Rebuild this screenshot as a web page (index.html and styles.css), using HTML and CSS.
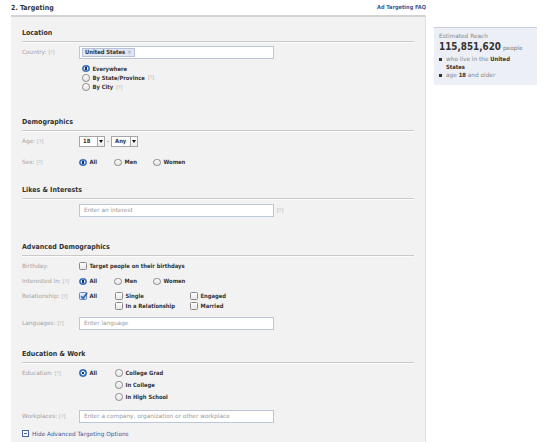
FILE: index.html
```html
<!DOCTYPE html>
<html>
<head>
<meta charset="utf-8">
<link rel="stylesheet" href="styles.css">
</head>
<body>
<div class="page">
  <div class="main">
    <div class="main-head">
      <h2 class="title">2. Targeting</h2>
      <a class="faq">Ad Targeting FAQ</a>
    </div>
    <div class="panel">
      <h3 class="sec sec-first">Location</h3>
      <div class="field f-country">
        <div class="lbl">Country: <span class="q">[?]</span></div>
        <div class="input token-input"><span class="token">United States <span class="x">×</span></span></div>
      </div>
      <div class="loc-opts">
        <div class="opt"><span class="radio on"></span>Everywhere</div>
        <div class="opt"><span class="radio"></span>By State/Province <span class="q">[?]</span></div>
        <div class="opt"><span class="radio"></span>By City <span class="q">[?]</span></div>
      </div>

      <h3 class="sec sec-demo">Demographics</h3>
      <div class="field f-age">
        <div class="lbl">Age: <span class="q">[?]</span></div>
        <div class="ages">
          <span class="sel sel-18"><span class="sv">18</span><span class="arr"></span></span>
          <span class="dash">-</span>
          <span class="sel sel-any"><span class="sv">Any</span><span class="arr"></span></span>
        </div>
      </div>
      <div class="field f-sex">
        <div class="lbl">Sex: <span class="q">[?]</span></div>
        <div class="opts cols-sex">
          <div class="opt"><span class="radio on"></span>All</div>
          <div class="opt"><span class="radio"></span>Men</div>
          <div class="opt"><span class="radio"></span>Women</div>
        </div>
      </div>

      <h3 class="sec sec-likes">Likes &amp; Interests</h3>
      <div class="field f-likes">
        <div class="lbl"></div>
        <div class="with-q"><div class="input"><span class="ph">Enter an interest</span></div><span class="q q-after">[?]</span></div>
      </div>

      <h3 class="sec sec-adv">Advanced Demographics</h3>
      <div class="field f-bday">
        <div class="lbl">Birthday:</div>
        <div class="opt"><span class="check"></span>Target people on their birthdays</div>
      </div>
      <div class="field f-int">
        <div class="lbl">Interested In: <span class="q">[?]</span></div>
        <div class="opts cols-sex">
          <div class="opt"><span class="radio on"></span>All</div>
          <div class="opt"><span class="radio"></span>Men</div>
          <div class="opt"><span class="radio"></span>Women</div>
        </div>
      </div>
      <div class="field f-rel">
        <div class="lbl">Relationship: <span class="q">[?]</span></div>
        <div class="opts cols-rel">
          <div class="opt"><span class="check on"><svg viewBox="0 0 8 8" width="8" height="8"><path d="M1.3 4.2 L3.2 6.3 L7.2 0.8" fill="none" stroke="#2a5db0" stroke-width="1.5"/></svg></span>All</div>
          <div class="opt"><span class="check"></span>Single</div>
          <div class="opt"><span class="check"></span>Engaged</div>
          <div class="opt"></div>
          <div class="opt"><span class="check"></span>In a Relationship</div>
          <div class="opt"><span class="check"></span>Married</div>
        </div>
      </div>
      <div class="field f-lang">
        <div class="lbl">Languages: <span class="q">[?]</span></div>
        <div class="input"><span class="ph">Enter language</span></div>
      </div>

      <h3 class="sec sec-edu">Education &amp; Work</h3>
      <div class="field f-edu">
        <div class="lbl">Education: <span class="q">[?]</span></div>
        <div class="opts cols-edu">
          <div class="opt"><span class="radio on"></span>All</div>
          <div class="opt"><span class="radio"></span>College Grad</div>
          <div class="opt"></div>
          <div class="opt"><span class="radio"></span>In College</div>
          <div class="opt"></div>
          <div class="opt"><span class="radio"></span>In High School</div>
        </div>
      </div>
      <div class="field f-work">
        <div class="lbl">Workplaces: <span class="q">[?]</span></div>
        <div class="input"><span class="ph">Enter a company, organization or other workplace</span></div>
      </div>
      <a class="hide"><span class="minus"></span>Hide Advanced Targeting Options</a>
    </div>
  </div>
  <aside class="reach">
    <div class="reach-title">Estimated Reach</div>
    <div class="reach-num"><b>115,851,620</b> <span>people</span></div>
    <ul class="reach-list">
      <li>who live in the <b>United</b> <b>States</b></li>
      <li>age <b>18</b> and older</li>
    </ul>
  </aside>
</div>
</body>
</html>
```

FILE: styles.css
```css
* { box-sizing: border-box; }
html, body { margin: 0; padding: 0; background: #fff; }
body {
  font-family: "DejaVu Sans", "Liberation Sans", sans-serif;
  font-size: 5.8px;
  color: #333;
  width: 550px;
  height: 442px;
  overflow: hidden;
}
.page { display: flex; align-items: flex-start; padding-left: 11px; }
.main { width: 415px; }
.main-head {
  height: 17px;
  border-bottom: 2px solid #d3d3d3;
  display: flex;
  justify-content: space-between;
  align-items: flex-start;
  padding-top: 3px;
}
.title {
  margin: 0;
  font-family: "DejaVu Sans Condensed", "DejaVu Sans", sans-serif;
  font-weight: bold;
  font-size: 7px;
  line-height: 10px;
  color: #333;
}
.faq {
  font-family: "DejaVu Sans Condensed", "DejaVu Sans", sans-serif;
  font-weight: bold;
  font-size: 5.6px;
  line-height: 8px;
  color: #3b5998;
}
.panel {
  background: #f2f2f2;
  border-right: 1px solid #e2e2e2;
  padding: 10px 11px 20px 11px;
  height: 440px;
}
.sec {
  margin: 0;
  font-family: "DejaVu Sans Condensed", "DejaVu Sans", sans-serif;
  font-weight: bold;
  font-size: 7px;
  line-height: 10px;
  padding-bottom: 3px;
  border-bottom: 1px solid #c9c9c9;
  box-shadow: 0 1px 0 #fbfbfb;
  color: #333;
}
.sec-first { margin-top: 1px; }
.sec-demo { margin-top: 25px; }
.sec-likes { margin-top: 17px; }
.sec-adv { margin-top: 25px; }
.sec-edu { margin-top: 19px; }

.field { display: grid; grid-template-columns: 57px 1fr; align-items: center; }
.lbl { color: #a3a3a3; line-height: 10px; white-space: nowrap; }
.q { color: #b0b0b0; font-size: 4.8px; }
.q-after { margin-left: 3px; }

.input {
  width: 195px;
  height: 13px;
  background: #fff;
  border: 1px solid #bdc7d8;
  display: flex;
  align-items: center;
  padding-left: 4px;
}
.ph { color: #999; }
.with-q { display: flex; align-items: center; }

.f-country { margin-top: 4px; }
.token-input { padding-left: 2px; }
.token {
  background: #e2e6f0;
  border: 1px solid #b5c0d9;
  height: 9px;
  line-height: 7px;
  padding: 0 2px;
  font-family: "DejaVu Sans Condensed", "DejaVu Sans", sans-serif;
  font-weight: bold;
  color: #333;
  display: inline-flex;
  align-items: center;
}
.token .x { color: #8a9bc0; font-weight: normal; margin-left: 2px; }

.loc-opts { margin: 5px 0 0 60px; }
.loc-opts .opt { height: 9.3px; }

.opt {
  display: flex;
  align-items: center;
  font-family: "DejaVu Sans Condensed", "DejaVu Sans", sans-serif;
  font-weight: bold;
  color: #333;
  white-space: nowrap;
}
.opt .q { font-family: "DejaVu Sans", sans-serif; font-weight: normal; margin-left: 3px; }

.radio {
  width: 7.5px; height: 7.5px;
  border-radius: 50%;
  border: 1px solid #8a8a8a;
  background: linear-gradient(#fdfdfd, #e3e3e3);
  margin-right: 3px;
  flex: none;
}
.radio.on {
  border-color: #27579f;
  background: radial-gradient(circle, #17305a 0 1.2px, #fff 1.4px 1.7px, #4b8be0 2px);
}
.check {
  width: 7.5px; height: 7.5px;
  border-radius: 1.5px;
  border: 1px solid #8a8a8a;
  background: linear-gradient(#fdfdfd, #e8e8e8);
  margin-right: 3px;
  flex: none;
  position: relative;
}
.check.on { border-color: #6c8ac0; background: linear-gradient(#e6eefb, #b9cdee); }
.check svg { position: absolute; left: -0.5px; top: -1.5px; }

.f-age { margin-top: 5px; }
.ages { display: flex; align-items: center; }
.sel {
  height: 11px;
  background: #fff;
  border: 1px solid #a6a6a6;
  display: flex;
  align-items: center;
  font-family: "DejaVu Sans Condensed", "DejaVu Sans", sans-serif;
  font-weight: bold;
}
.sel-18 { width: 26px; }
.sel-any { width: 27px; }
.sv { flex: 1; padding-left: 3px; }
.arr {
  width: 7px; height: 9px;
  border-left: 1px solid #a6a6a6;
  position: relative;
  background: linear-gradient(#fff, #ececec);
}
.arr::after {
  content: "";
  position: absolute;
  left: 1.2px; top: 3px;
  border-left: 2px solid transparent;
  border-right: 2px solid transparent;
  border-top: 3px solid #111;
}
.dash { color: #666; margin: 0 2px; }

.opts { display: grid; }
.opts .opt { height: 10px; }
.cols-sex { grid-template-columns: 35px 39px auto; }
.f-sex { margin-top: 10px; }

.f-likes { margin-top: 5px; }

.f-bday { margin-top: 5px; }
.f-bday .opt { height: 10px; }
.f-int { margin-top: 5px; }
.f-rel { margin-top: 4px; align-items: start; }
.cols-rel { grid-template-columns: 36px 75px auto; }
.f-lang { margin-top: 6px; }

.f-edu { margin-top: 4px; align-items: start; }
.f-edu .lbl { line-height: 12px; }
.cols-edu { grid-template-columns: 36px auto; }
.cols-edu .opt { height: 12px; }
.f-work { margin-top: 7px; }

.hide {
  display: flex;
  align-items: center;
  margin-top: 6px;
  height: 10px;
  color: #3b5998;
}
.minus {
  width: 7px; height: 7px;
  border: 1px solid #4a66a0;
  background: #fff;
  margin-right: 3px;
  position: relative;
}
.minus::after {
  content: "";
  position: absolute;
  left: 1px; right: 1px; top: 2px;
  height: 1px;
  background: #4a66a0;
}

.reach {
  margin-left: 8px;
  margin-top: 27px;
  width: 103px;
  background: #eceff5;
  border-top: 1px solid #c8d0e0;
  padding: 4px 16px 6px 5px;
}
.reach-title { color: #8a8a8a; line-height: 8px; }
.reach-num { display: flex; align-items: baseline; margin-top: 1px; line-height: 12px; white-space: nowrap; }
.reach-num b {
  font-family: "DejaVu Sans Condensed", "DejaVu Sans", sans-serif;
  font-size: 9.8px;
  color: #333;
}
.reach-num span { color: #777; margin-left: 2px; }
.reach-list { list-style: none; margin: 1px 0 0 0; padding: 0; color: #888; }
.reach-list li { position: relative; padding-left: 7px; line-height: 8px; }
.reach-list li::before {
  content: "";
  position: absolute;
  left: 0; top: 3px;
  width: 2.5px; height: 2.5px;
  background: #333;
}
.reach-list b { color: #333; font-family: "DejaVu Sans Condensed", "DejaVu Sans", sans-serif; }
```
